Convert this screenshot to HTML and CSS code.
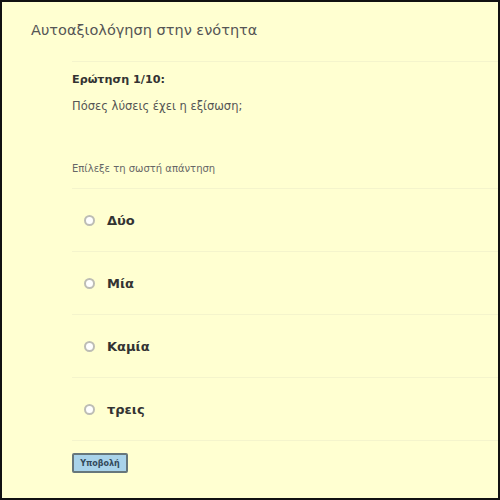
FILE: index.html
```html
<!DOCTYPE html>
<html lang="el">
<head>
<meta charset="utf-8">
<title>Αυτοαξιολόγηση</title>
<link rel="stylesheet" href="styles.css">
</head>
<body>
<div class="page">
  <h1 class="title">Αυτοαξιολόγηση στην ενότητα</h1>
  <div class="quiz">
    <div class="question">
      <div class="qnum">Ερώτηση 1/10:</div>
      <div class="qtext">Πόσες λύσεις έχει η εξίσωση;</div>
    </div>
    <div class="hint">Επίλεξε τη σωστή απάντηση</div>
    <ul class="options">
      <li class="option"><span class="radio"></span><span class="label">Δύο</span></li>
      <li class="option"><span class="radio"></span><span class="label">Μία</span></li>
      <li class="option"><span class="radio"></span><span class="label">Καμία</span></li>
      <li class="option"><span class="radio"></span><span class="label">τρεις</span></li>
    </ul>
    <button class="submit" type="button">Υποβολή</button>
  </div>
</div>
</body>
</html>
```
FILE: styles.css
```css
html, body {
  margin: 0;
  padding: 0;
}
body {
  font-family: "DejaVu Sans", Verdana, sans-serif;
  background: #ffffd1;
}
.page {
  box-sizing: border-box;
  width: 500px;
  height: 500px;
  border: 2px solid #111;
  background: #ffffd1;
  overflow: hidden;
}
.title {
  margin: 0;
  padding: 17px 0 0 29px;
  height: 59px;
  box-sizing: border-box;
  font-size: 14.5px;
  font-weight: normal;
  color: #555;
  line-height: 22px;
}
.quiz {
  margin-left: 70px;
  border-top: 1px solid #f4f4cc;
  padding-top: 10px;
}
.qnum {
  font-weight: bold;
  font-size: 11.2px;
  color: #333;
  line-height: 16px;
}
.qtext {
  font-size: 11.5px;
  color: #555;
  margin-top: 10px;
  line-height: 16px;
}
.hint {
  margin-top: 48px;
  font-size: 10px;
  color: #666;
  line-height: 14px;
  padding-bottom: 12px;
  border-bottom: 1px solid #f4f4cc;
}
.options {
  list-style: none;
  margin: 0;
  padding: 0;
}
.option {
  display: flex;
  align-items: center;
  gap: 12px;
  height: 62px;
  padding-left: 12px;
  border-bottom: 1px solid #f4f4cc;
}
.radio {
  box-sizing: border-box;
  width: 11px;
  height: 11px;
  border: 2px solid #bdbdb5;
  border-radius: 50%;
  background: #fff;
}
.label {
  font-weight: bold;
  font-size: 13px;
  color: #333;
}
.submit {
  margin-top: 12px;
  margin-left: 0;
  width: 56px;
  height: 20px;
  padding: 0;
  background: #a9d3ea;
  border: 2px solid #66777c;
  border-radius: 2px;
  font-family: "DejaVu Sans", sans-serif;
  font-size: 8px;
  font-weight: bold;
  color: #344a5a;
}
```
